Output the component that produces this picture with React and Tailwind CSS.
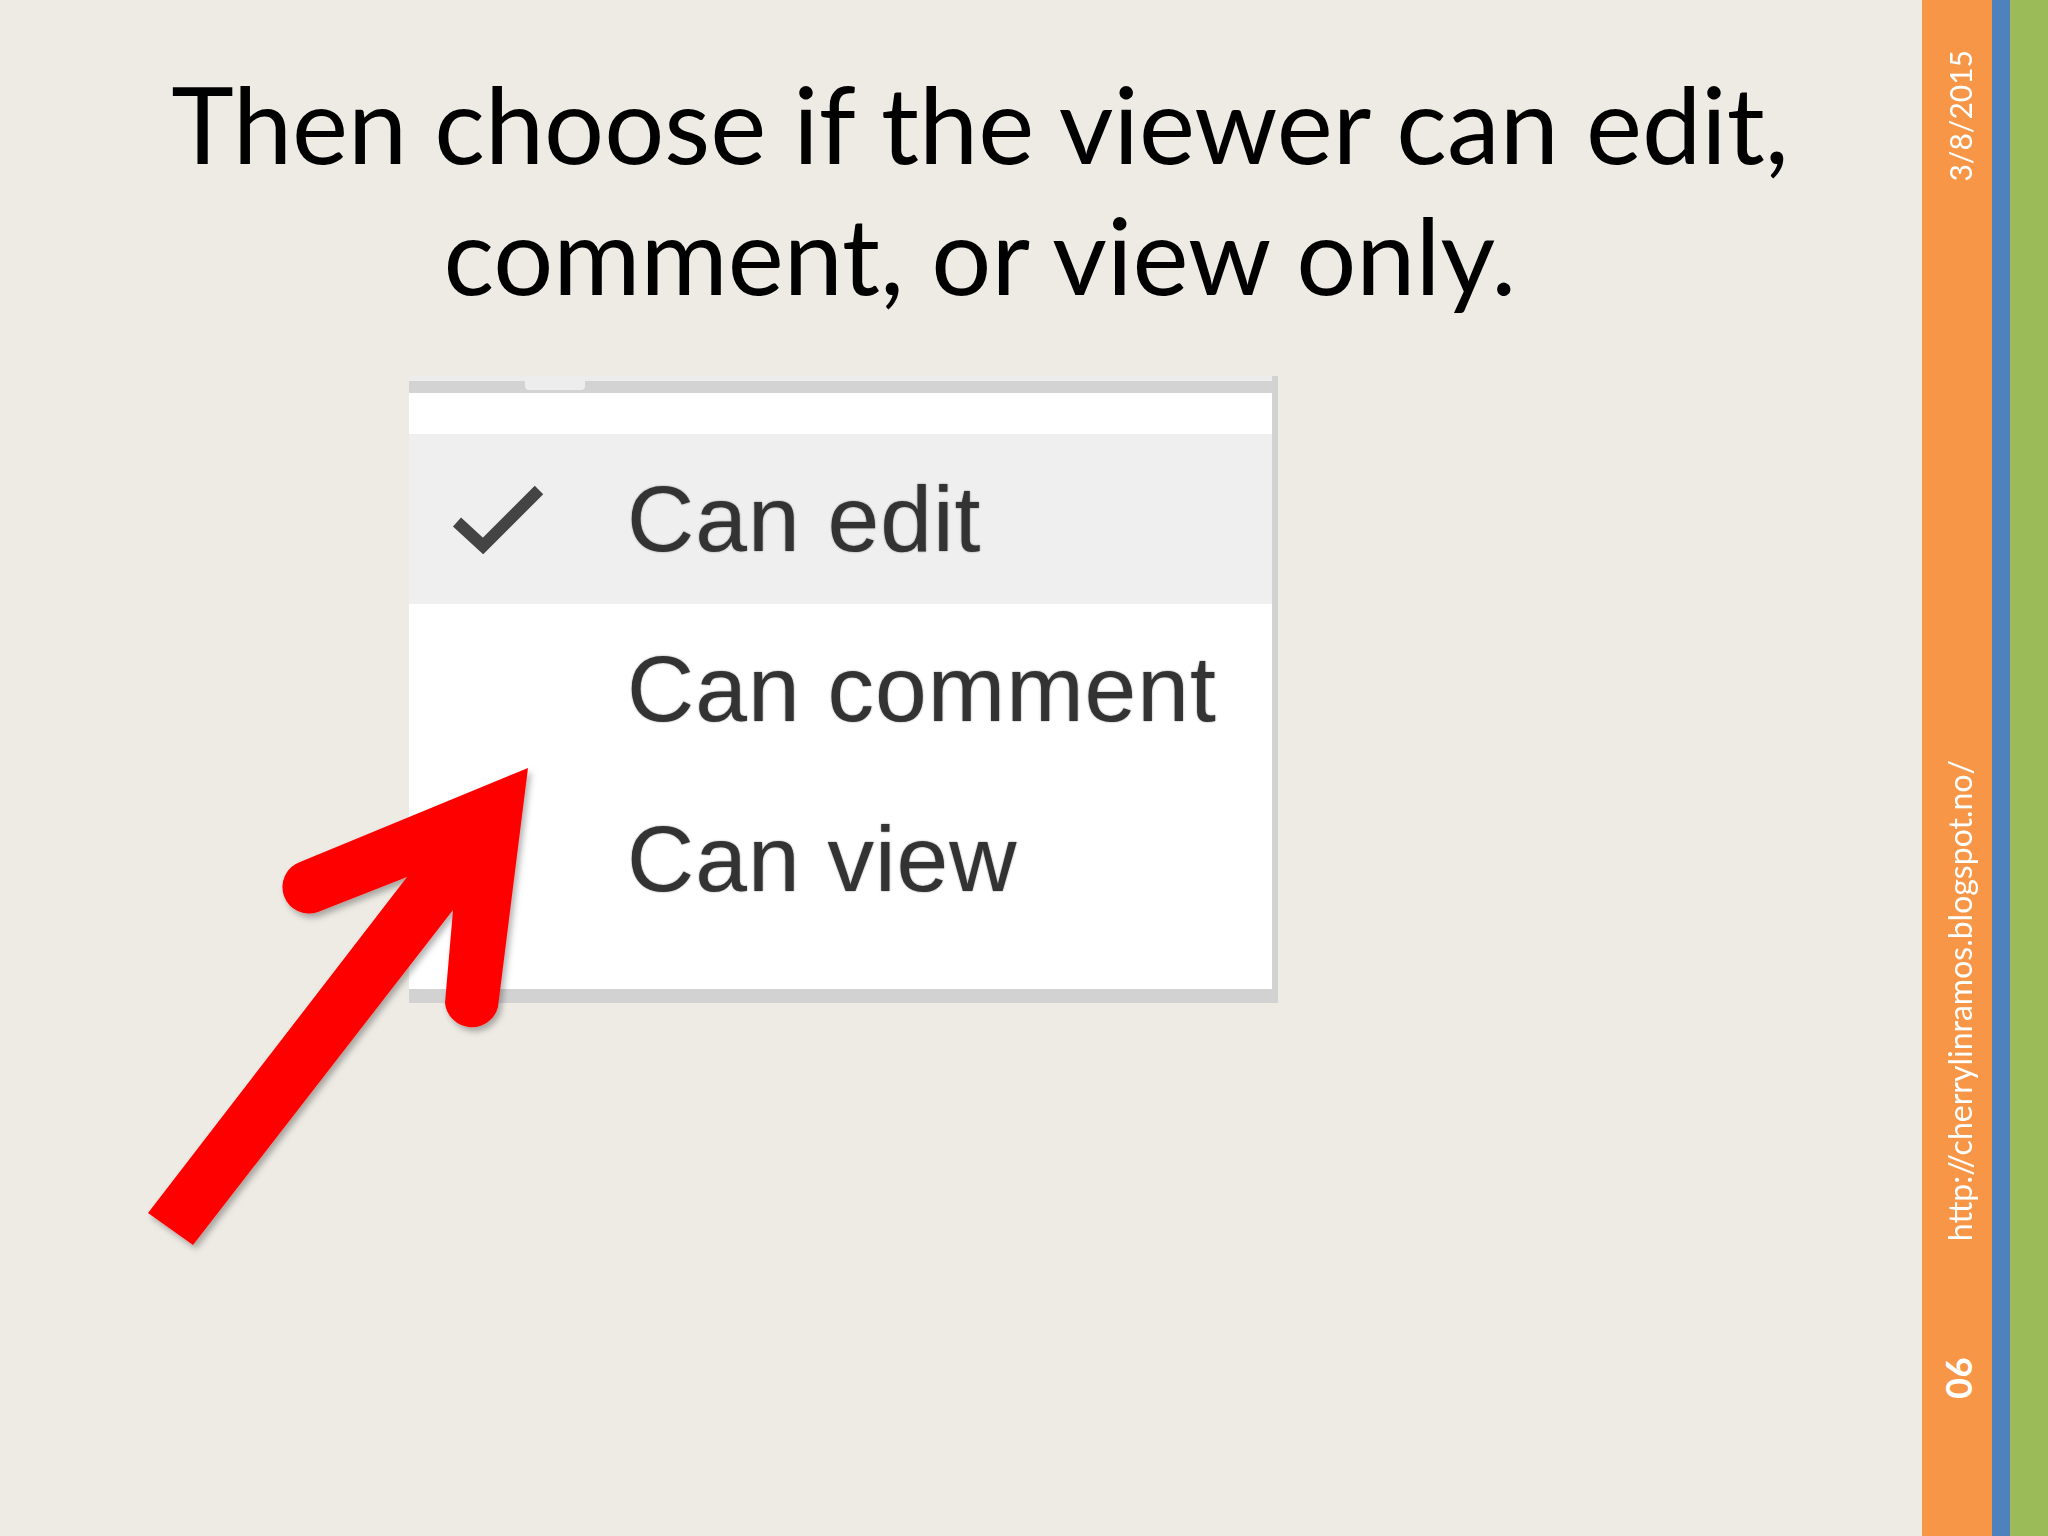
import React from 'react';

const title = "'Lato', 'Open Sans', sans-serif";
const ui = "'Liberation Sans', Arial, sans-serif";

const options = [
  { label: 'Can edit', checked: true },
  { label: 'Can comment', checked: false },
  { label: 'Can view', checked: false },
];

// big red pointer over the menu
const Arrow = () => (
  <svg
    className="pointer-events-none absolute left-0 top-0"
    width="2048"
    height="1536"
    viewBox="0 0 2048 1536"
  >
    <defs>
      <filter id="arrowShadow" x="-10%" y="-10%" width="130%" height="130%">
        <feDropShadow dx="3" dy="4" stdDeviation="3" floodColor="#000" floodOpacity="0.3" />
      </filter>
    </defs>
    <path
      filter="url(#arrowShadow)"
      fill="#ff0000"
      d="M528 768 L300 862 A26 26 0 0 0 318 912 L407 877 L148 1213 L193 1245 L453 910 L445 1003 A27 27 0 0 0 498 1007 Z"
    />
  </svg>
);

const Check = () => (
  <svg width="100" height="70" viewBox="0 0 100 70" className="shrink-0">
    <path d="M10 38 L36 62 L92 6" fill="none" stroke="#444" strokeWidth="12" strokeLinejoin="miter" />
  </svg>
);

const ShareMenu = () => (
  <div className="ml-[409px] mt-[56px] flex h-[627px] w-[869px] flex-col border-b-[14px] border-r-[6px] border-[#d2d2d2] bg-white">
    <div className="relative h-[17px] bg-[#d3d3d3]">
      <div className="h-[5px] bg-[#ececec]" />
      <div className="absolute left-[116px] top-0 h-[14px] w-[60px] rounded-sm bg-[#ededed]" />
    </div>
    <div className="h-[41px]" />
    {options.map((o) => (
      <div
        key={o.label}
        className={`flex h-[170px] items-center ${o.checked ? 'bg-[#efefef]' : 'bg-white'}`}
        style={{ fontFamily: ui }}
      >
        <div className="flex w-[218px] justify-start pl-[38px]">{o.checked && <Check />}</div>
        <span className="text-[93px] leading-none tracking-[1px] text-[#333] [text-shadow:0_0_2px_rgba(0,0,0,0.45)]">
          {o.label}
        </span>
      </div>
    ))}
  </div>
);

const SideBar = () => (
  <div className="flex h-full">
    <div className="flex w-[70px] flex-col items-center bg-[#f79646] pl-[6px] text-white" style={{ fontFamily: title }}>
      <span className="mt-[50px] rotate-180 text-[30px] leading-none [writing-mode:vertical-rl]">3/8/2015</span>
      <span className="mt-[578px] rotate-180 text-[32px] leading-none [writing-mode:vertical-rl]">
        http://cherrylinramos.blogspot.no/
      </span>
      <span className="mt-[116px] text-[36px] font-bold leading-none [writing-mode:vertical-rl]">90</span>
    </div>
    <div className="w-[18px] bg-[#4f81bd]" />
    <div className="w-[38px] bg-[#9bbb59]" />
  </div>
);

export default function App() {
  return (
    <div className="relative flex h-[1536px] w-[2048px] overflow-hidden bg-[#eeebe5]">
      <div className="flex flex-1 flex-col">
        <h1
          className="pl-[38px] pt-[58px] text-center text-[106px] font-normal leading-[131px] text-black"
          style={{ fontFamily: title }}
        >
          Then choose if the viewer can edit,
          <br />
          comment, or view only.
        </h1>
        <ShareMenu />
      </div>
      <SideBar />
      <Arrow />
    </div>
  );
}
